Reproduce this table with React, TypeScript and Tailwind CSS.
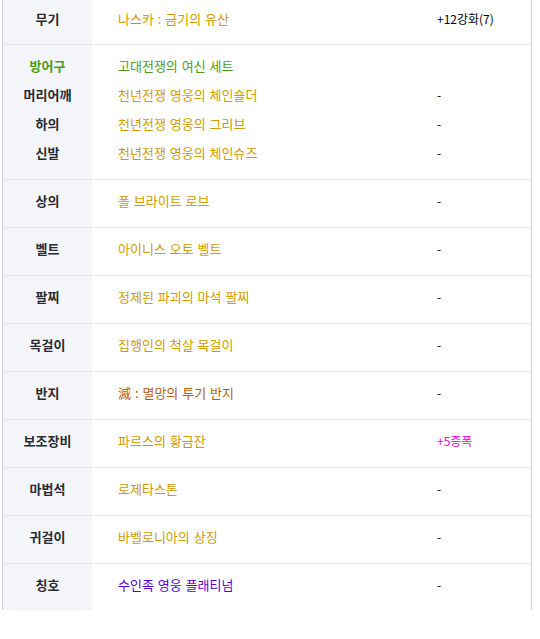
import React from "react";

type Row = { label: string; item: string; color: string; value?: string; valueColor?: string };

const GOLD = "text-[#d09a00]";

const rows: Row[] = [
  { label: "상의", item: "폴 브라이트 로브", color: GOLD, value: "-" },
  { label: "벨트", item: "아이니스 오토 벨트", color: GOLD, value: "-" },
  { label: "팔찌", item: "정제된 파괴의 마석 팔찌", color: GOLD, value: "-" },
  { label: "목걸이", item: "집행인의 척살 목걸이", color: GOLD, value: "-" },
  { label: "반지", item: "滅 : 멸망의 투기 반지", color: "text-[#b95e00]", value: "-" },
  { label: "보조장비", item: "파르스의 황금잔", color: GOLD, value: "+5증폭", valueColor: "text-[#e000e0]" },
  { label: "마법석", item: "로제타스톤", color: GOLD, value: "-" },
  { label: "귀걸이", item: "바벨로니아의 상징", color: GOLD, value: "-" },
  { label: "칭호", item: "수인족 영웅 플래티넘", color: "text-[#5b00d0]", value: "-" },
];

const armor: Row[] = [
  { label: "방어구", item: "고대전쟁의 여신 세트", color: "text-[#4a9e1b]" },
  { label: "머리어깨", item: "천년전쟁 영웅의 체인숄더", color: GOLD, value: "-" },
  { label: "하의", item: "천년전쟁 영웅의 그리브", color: GOLD, value: "-" },
  { label: "신발", item: "천년전쟁 영웅의 체인슈즈", color: GOLD, value: "-" },
];

const Line = ({ r, h }: { r: Row; h: string }) => (
  <div className={`flex ${h} items-center`}>
    <div
      className={`w-[89px] text-center text-[13px] font-bold ${
        r.label === "방어구" ? "text-[#4a9e1b]" : "text-[#2a2b33]"
      }`}
    >
      {r.label}
    </div>
    <div className={`w-[345px] pl-[26px] text-[13px] [word-spacing:1px] ${r.color}`}>{r.item}</div>
    <div className={`flex-1 text-[12px] ${r.valueColor ?? "text-black"}`}>{r.value}</div>
  </div>
);

export default function App() {
  return (
    <div
      className="h-[639px] w-[540px] bg-white"
      style={{ fontFamily: '"Noto Sans CJK KR", "Noto Sans", sans-serif' }}
    >
      <div className="ml-[2px] w-[530px] border-l border-r border-l-[#c9cbd9] border-r-[#d4d4d4] bg-[linear-gradient(to_right,#f4f5f9_89px,#ffffff_89px)]">
        {/* 무기 */}
        <div className="border-b border-[#e6e6ea] pb-[7px]">
          <Line
            r={{ label: "무기", item: "나스카 : 금기의 유산", color: GOLD, value: "+12강화(7)" }}
            h="h-[37px]"
          />
        </div>
        {/* 방어구 세트 */}
        <div className="flex flex-col border-b border-[#e6e6ea] pt-[8px] pb-[10px]">
          {armor.map((r) => (
            <div key={r.label} className="pb-[4px]">
              <Line r={r} h="h-[25px]" />
            </div>
          ))}
        </div>
        {rows.map((r, i) => (
          <div
            key={r.label}
            className={i < rows.length - 1 ? "border-b border-[#e6e6ea] pb-[5px]" : "pb-[5px]"}
          >
            <Line r={r} h={i < rows.length - 1 ? "h-[42px]" : "h-[41px]"} />
          </div>
        ))}
      </div>
    </div>
  );
}
